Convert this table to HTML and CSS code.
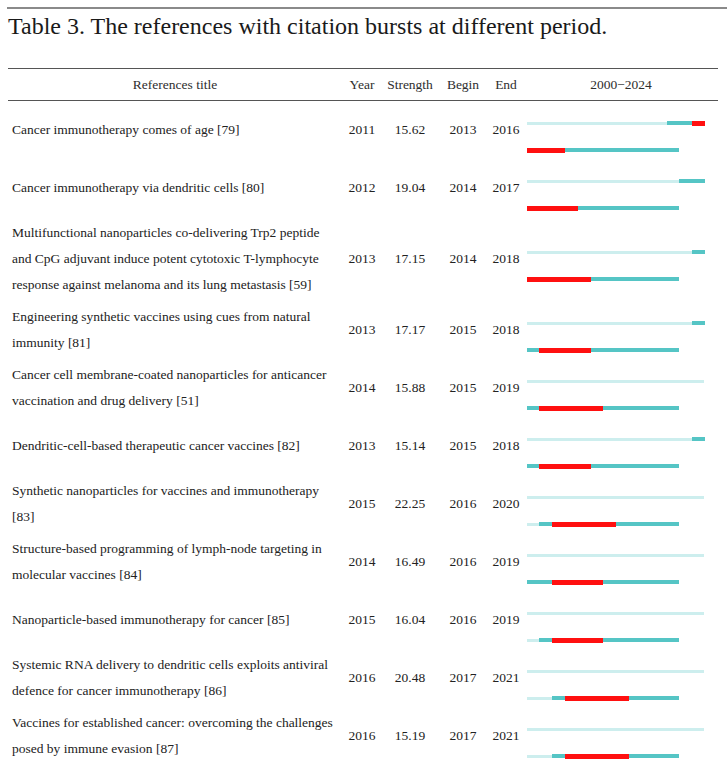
FILE: index.html
```html
<!DOCTYPE html>
<html lang="en">
<head>
<meta charset="utf-8">
<title>Table 3</title>
<link rel="stylesheet" href="styles.css">
</head>
<body>
<div class="page">
  <h1 class="caption">Table 3. The references with citation bursts at different period.</h1>
  <div class="table">
    <div class="row head">
      <div class="c title">References title</div>
      <div class="c">Year</div>
      <div class="c">Strength</div>
      <div class="c">Begin</div>
      <div class="c">End</div>
      <div class="c graph-h">2000−2024</div>
    </div>

    <div class="row">
      <div class="c title">Cancer immunotherapy comes of age [79]</div>
      <div class="c">2011</div><div class="c">15.62</div><div class="c">2013</div><div class="c">2016</div>
      <div class="graph">
        <div class="track"><span class="seg lt" style="width:140px"></span><span class="seg tl" style="width:25px"></span><span class="seg rd" style="width:13px"></span></div>
        <div class="track"><span class="seg rd" style="width:38px"></span><span class="seg tl" style="width:114px"></span></div>
      </div>
    </div>

    <div class="row">
      <div class="c title">Cancer immunotherapy via dendritic cells [80]</div>
      <div class="c">2012</div><div class="c">19.04</div><div class="c">2014</div><div class="c">2017</div>
      <div class="graph">
        <div class="track"><span class="seg lt" style="width:152px"></span><span class="seg tl" style="width:26px"></span></div>
        <div class="track"><span class="seg rd" style="width:51px"></span><span class="seg tl" style="width:101px"></span></div>
      </div>
    </div>

    <div class="row">
      <div class="c title">Multifunctional nanoparticles co-delivering Trp2 peptide<br>and CpG adjuvant induce potent cytotoxic T-lymphocyte<br>response against melanoma and its lung metastasis [59]</div>
      <div class="c">2013</div><div class="c">17.15</div><div class="c">2014</div><div class="c">2018</div>
      <div class="graph">
        <div class="track"><span class="seg lt" style="width:165px"></span><span class="seg tl" style="width:13px"></span></div>
        <div class="track"><span class="seg rd" style="width:64px"></span><span class="seg tl" style="width:88px"></span></div>
      </div>
    </div>

    <div class="row">
      <div class="c title">Engineering synthetic vaccines using cues from natural<br>immunity [81]</div>
      <div class="c">2013</div><div class="c">17.17</div><div class="c">2015</div><div class="c">2018</div>
      <div class="graph">
        <div class="track"><span class="seg lt" style="width:165px"></span><span class="seg tl" style="width:13px"></span></div>
        <div class="track"><span class="seg tl" style="width:12px"></span><span class="seg rd" style="width:52px"></span><span class="seg tl" style="width:88px"></span></div>
      </div>
    </div>

    <div class="row">
      <div class="c title">Cancer cell membrane-coated nanoparticles for anticancer<br>vaccination and drug delivery [51]</div>
      <div class="c">2014</div><div class="c">15.88</div><div class="c">2015</div><div class="c">2019</div>
      <div class="graph">
        <div class="track"><span class="seg lt" style="width:177px"></span></div>
        <div class="track"><span class="seg tl" style="width:12px"></span><span class="seg rd" style="width:64px"></span><span class="seg tl" style="width:76px"></span></div>
      </div>
    </div>

    <div class="row">
      <div class="c title">Dendritic-cell-based therapeutic cancer vaccines [82]</div>
      <div class="c">2013</div><div class="c">15.14</div><div class="c">2015</div><div class="c">2018</div>
      <div class="graph">
        <div class="track"><span class="seg lt" style="width:165px"></span><span class="seg tl" style="width:13px"></span></div>
        <div class="track"><span class="seg tl" style="width:12px"></span><span class="seg rd" style="width:52px"></span><span class="seg tl" style="width:88px"></span></div>
      </div>
    </div>

    <div class="row">
      <div class="c title">Synthetic nanoparticles for vaccines and immunotherapy<br>[83]</div>
      <div class="c">2015</div><div class="c">22.25</div><div class="c">2016</div><div class="c">2020</div>
      <div class="graph">
        <div class="track"><span class="seg lt" style="width:177px"></span></div>
        <div class="track"><span class="seg lt" style="width:12px"></span><span class="seg tl" style="width:13px"></span><span class="seg rd" style="width:64px"></span><span class="seg tl" style="width:63px"></span></div>
      </div>
    </div>

    <div class="row">
      <div class="c title">Structure-based programming of lymph-node targeting in<br>molecular vaccines [84]</div>
      <div class="c">2014</div><div class="c">16.49</div><div class="c">2016</div><div class="c">2019</div>
      <div class="graph">
        <div class="track"><span class="seg lt" style="width:177px"></span></div>
        <div class="track"><span class="seg tl" style="width:25px"></span><span class="seg rd" style="width:51px"></span><span class="seg tl" style="width:76px"></span></div>
      </div>
    </div>

    <div class="row">
      <div class="c title">Nanoparticle-based immunotherapy for cancer [85]</div>
      <div class="c">2015</div><div class="c">16.04</div><div class="c">2016</div><div class="c">2019</div>
      <div class="graph">
        <div class="track"><span class="seg lt" style="width:177px"></span></div>
        <div class="track"><span class="seg lt" style="width:12px"></span><span class="seg tl" style="width:13px"></span><span class="seg rd" style="width:51px"></span><span class="seg tl" style="width:76px"></span></div>
      </div>
    </div>

    <div class="row">
      <div class="c title">Systemic RNA delivery to dendritic cells exploits antiviral<br>defence for cancer immunotherapy [86]</div>
      <div class="c">2016</div><div class="c">20.48</div><div class="c">2017</div><div class="c">2021</div>
      <div class="graph">
        <div class="track"><span class="seg lt" style="width:177px"></span></div>
        <div class="track"><span class="seg lt" style="width:25px"></span><span class="seg tl" style="width:13px"></span><span class="seg rd" style="width:64px"></span><span class="seg tl" style="width:50px"></span></div>
      </div>
    </div>

    <div class="row">
      <div class="c title">Vaccines for established cancer: overcoming the challenges<br>posed by immune evasion [87]</div>
      <div class="c">2016</div><div class="c">15.19</div><div class="c">2017</div><div class="c">2021</div>
      <div class="graph">
        <div class="track"><span class="seg lt" style="width:177px"></span></div>
        <div class="track"><span class="seg lt" style="width:25px"></span><span class="seg tl" style="width:13px"></span><span class="seg rd" style="width:64px"></span><span class="seg tl" style="width:50px"></span></div>
      </div>
    </div>
  </div>
</div>
</body>
</html>
```

FILE: styles.css
```css
html, body {
  margin: 0;
  padding: 0;
  background: #ffffff;
}

.page {
  padding: 7px 0 0 7px;
}

.caption {
  margin: 0;
  border-top: 2px solid #8a8a8a;
  padding: 2px 0 0 1px;
  font-family: "Liberation Serif", "Times New Roman", serif;
  font-weight: normal;
  font-size: 24px;
  line-height: 30px;
  color: #1a1a1a;
}

.table {
  margin: 27px 0 0 1px;
  width: 710px;
  border-top: 1.5px solid #555555;
  font-family: "Liberation Serif", "Times New Roman", serif;
  font-size: 13.5px;
  color: #222222;
}

.row {
  display: grid;
  grid-template-columns: 334px 40px 56px 50px 36px 1fr;
  align-items: center;
  min-height: 58px;
  padding: 3px 0;
  box-sizing: border-box;
}

.row.head {
  min-height: 0;
  height: 32px;
  padding: 0;
  border-bottom: 1.5px solid #555555;
  color: #2e2e2e;
}

.c {
  text-align: center;
  white-space: nowrap;
}

.c.title {
  text-align: left;
  padding-left: 4px;
  line-height: 26px;
}

.head .c.title {
  text-align: center;
  padding-left: 0;
}

.graph-h {
  text-align: center;
}

.graph {
  display: flex;
  flex-direction: column;
  justify-content: center;
  gap: 22px;
  padding: 13px 0 0 3px;
}

.track {
  display: flex;
  align-items: center;
  height: 5px;
}

.seg {
  display: block;
  flex: none;
}

.seg.lt {
  height: 3px;
  background: #cdeeee;
}

.seg.tl {
  height: 4px;
  background: #55c5c5;
}

.seg.rd {
  height: 5px;
  background: #ff1010;
}
```
